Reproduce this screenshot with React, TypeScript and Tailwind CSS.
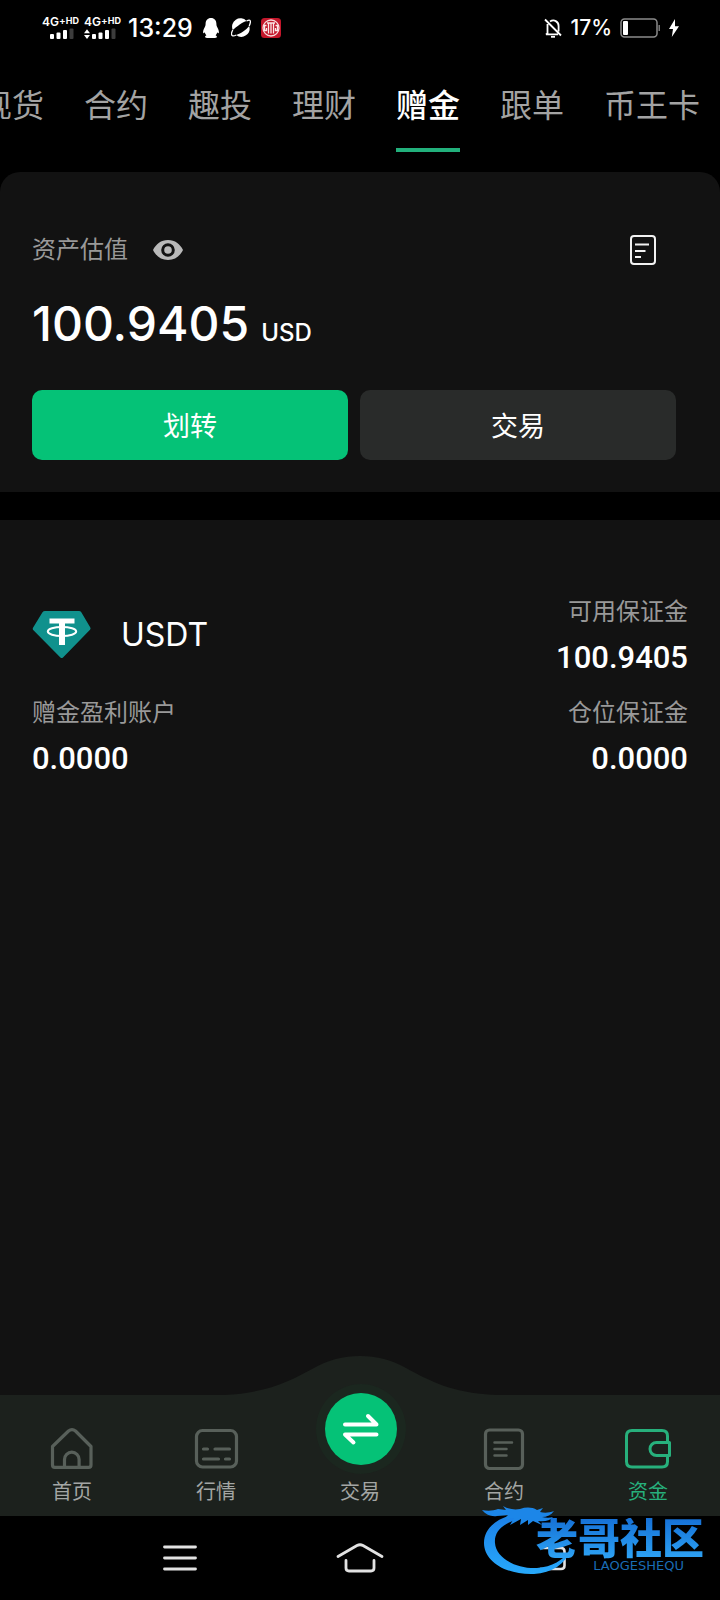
import type { ReactNode } from "react";

const tabs = ["现货", "合约", "趣投", "理财", "赠金", "跟单", "币王卡"];

function Signal({ data }: { data?: boolean }) {
  return (
    <div className="flex w-9 flex-col text-white">
      <div className="flex h-3 items-start font-semibold leading-3">
        <span className="text-[12px]">4G</span>
        <span className="text-[10px] leading-[8px]">+</span>
        <span className="text-[9px] font-bold leading-[9px]">HD</span>
      </div>
      <svg className="h-3 w-9" viewBox="0 0 36 12" fill="currentColor" aria-hidden="true">
        {data && <path d="M0 5.2 3 1.2 6 5.2zM0 7 3 11 6 7z" />}
        <rect x="8" y="6" width="4" height="5" rx="1" />
        <rect x="14.500" y="4.500" width="4" height="6.500" rx="1" />
        <rect x="21" y="2" width="4" height="9" rx="1" />
        <rect x="27.500" y="0.500" width="4" height="10.500" rx="1" fill="#3c3c3c" />
      </svg>
    </div>
  );
}

function StatusBar() {
  return (
    <div className="flex h-14 items-center justify-between pl-[42px] pr-10">
      <div className="flex items-center">
        <Signal />
        <div className="ml-1.5">
          <Signal data />
        </div>
        <span className="ml-2 text-[25px] font-medium leading-8">13:29</span>
        <svg className="ml-2.5 h-5 w-4" viewBox="0 0 16 20" fill="#fff" aria-hidden="true">
          <path d="M8 0c3.400 0 5.400 2.600 5.400 5.800 0 1.500.3 2.400 1 3.700.9 1.600 1.600 3.400 1.500 5-.1 1.300-1 .9-1.700-.2-.2 1.200-.8 2.200-1.600 3 .9.500 1.400 1 1.300 1.700-.1.900-1.500 1-3 1H5.100c-1.500 0-2.900-.1-3-1-.1-.7.400-1.200 1.300-1.700-.8-.8-1.400-1.800-1.600-3-.7 1.100-1.600 1.500-1.700.2-.1-1.600.6-3.400 1.500-5 .7-1.300 1-2.200 1-3.700C2.600 2.600 4.600 0 8 0z" />
        </svg>
        <svg className="ml-3 h-5 w-5" viewBox="0 0 20 20" fill="none" aria-hidden="true">
          <path d="M1.800 12A8.300 8.300 0 0 1 15.500 3C12 4 5.500 8.500 1.800 12z" fill="#fff" />
          <path d="M5.200 17C10 15.500 15.500 11.500 18.200 8a8.300 8.300 0 0 1-13 9z" fill="#fff" />
          <path d="M1.800 12C.4 14.500.2 17 1.400 17.700c.9.500 2.300.1 3.900-.7M15.500 3c1.800-.9 3.300-1 3.700-.2.500 1-.1 3.200-1 5.200" stroke="#fff" strokeWidth="1.300" />
        </svg>
        <svg className="ml-2.5 h-5 w-5" viewBox="0 0 20 20" fill="none" aria-hidden="true">
          <rect width="20" height="20" rx="3.500" fill="#c3172b" />
          <circle cx="10" cy="10" r="8" stroke="#f7dcdc" strokeWidth="1.300" />
          <path d="M7.500 5v10.500M10 5v10.500M12.500 5v10.500M6 5h8M5.500 7.500H3.500v5h2V10M14.500 7.500h2v5h-2V10" stroke="#fbe9e9" strokeWidth="1.300" />
        </svg>
      </div>
      <div className="flex items-center">
        <svg className="h-5 w-[18px]" viewBox="0 0 18 20" fill="none" stroke="#fff" strokeWidth="1.800" aria-hidden="true">
          <path d="M1 1.500 17 17.500M3.500 6v9.500L2 16.300h12M6 3.600C10 .8 14.600 3.600 14.600 8v5.500" />
          <path d="M7 18.800h4" />
        </svg>
        <span className="ml-2 text-[21px] font-medium leading-8">17%</span>
        <svg className="ml-2 h-5 w-10" viewBox="0 0 40 20" fill="none" aria-hidden="true">
          <rect x="1" y="1" width="36" height="18" rx="3.500" stroke="#8b8b8b" strokeWidth="1.500" />
          <rect x="3" y="3" width="5" height="14" rx="1" fill="#fff" />
          <path d="M39.200 7v6" stroke="#8b8b8b" strokeWidth="1.300" />
        </svg>
        <svg className="ml-2 h-[18px] w-3" viewBox="0 0 12 18" fill="#fff" aria-hidden="true">
          <path d="M7 0 1 10h4l-1.200 8L11 7.300H7z" />
        </svg>
      </div>
    </div>
  );
}

function Figure({ label, value, right }: { label: string; value: string; right?: boolean }) {
  return (
    <div className={right ? "flex flex-col gap-2.5 text-right" : "flex flex-col gap-2.5"}>
      <dt className="text-2xl leading-9 text-[#999]">{label}</dt>
      <dd className="font-[Roboto] text-[31px] font-medium leading-9">{value}</dd>
    </div>
  );
}

function NavItem({ label, active, children }: { label: string; active?: boolean; children: ReactNode }) {
  return (
    <a
      href="#"
      aria-current={active ? "page" : undefined}
      className={
        active
          ? "flex flex-col items-center gap-1.5 text-[#27b07c]"
          : "flex flex-col items-center gap-1.5 text-[#a3a6a4]"
      }
    >
      <svg
        className={active ? "h-12 w-12" : "h-12 w-12 text-[#58605a]"}
        viewBox="0 0 48 48"
        fill="none"
        stroke="currentColor"
        strokeWidth="3.200"
        strokeLinecap="round"
        strokeLinejoin="round"
        aria-hidden="true"
      >
        {children}
      </svg>
      <span className="text-xl leading-7">{label}</span>
    </a>
  );
}

function Watermark() {
  return (
    <div className="pointer-events-none absolute bottom-6 right-4 h-[72px] w-[222px]">
      <svg className="absolute inset-0 h-full w-full" viewBox="0 0 222 72" fill="none" aria-hidden="true">
        <defs>
          <linearGradient id="dragon" x1="0" y1="0" x2="0" y2="1">
            <stop offset="0" stopColor="#1c7fe6" />
            <stop offset="1" stopColor="#27a9fb" />
          </linearGradient>
        </defs>
        <path
          d="M32 11C14 14 2 25 2 39c0 18 21 32 50 31 18-1 31-10 37-24-8 10-19 17-34 18C34 65 14 54 13 39 12 28 20 20 36 15z"
          fill="url(#dragon)"
        />
        <path
          d="M0 6c5 1 11 1 16-1l8 1-3-4c5 3 11 4 17 3 6-2 12-2 17 1l6-2-3 4c4 1 9 1 14-1-3 4-7 6-12 6 4 1 8 1 11 0-3 4-9 5-15 4l4 4-9-4-5 4v-5l-8 5 1-6-11 6 4-7-11 2 5-5-11 1C10 13 4 11 0 6z"
          fill="#1c86e8"
        />
      </svg>
      <div className="absolute inset-y-0 right-0 flex flex-col items-end justify-end pb-1">
        <span className="bg-gradient-to-b from-[#1670d6] to-[#2fa4f4] bg-clip-text text-[42px] font-black leading-[42px] text-transparent">
          老哥社区
        </span>
        <span className="pr-5 font-['DejaVu_Sans'] text-[13px] leading-3 text-[#1a6cb4]">LAOGESHEQU</span>
      </div>
    </div>
  );
}

export default function App() {
  return (
    <div className="flex min-h-screen flex-col overflow-x-hidden bg-black font-[Inter,'Noto_Sans_CJK_SC',sans-serif] text-white">
      <StatusBar />

      <nav className="flex h-[116px] justify-end overflow-hidden pr-5">
        <div className="flex shrink-0 gap-10 pt-[26px]">
          {tabs.map((tab) => (
            <a
              key={tab}
              href="#"
              aria-current={tab === "赠金" ? "page" : undefined}
              className={
                tab === "赠金"
                  ? "h-[70px] whitespace-nowrap border-b-4 border-[#22b07c] text-[32px] font-medium leading-[48px]"
                  : "h-[70px] whitespace-nowrap text-[32px] leading-[48px] text-[#a3a3a3]"
              }
            >
              {tab}
            </a>
          ))}
        </div>
      </nav>

      <section className="rounded-t-[20px] bg-[#121212] pb-8 pl-8 pr-11 pt-[60px]">
        <div className="flex h-9 items-center justify-between">
          <div className="flex items-center gap-6">
            <h1 className="text-2xl leading-9 text-[#999]">资产估值</h1>
            <button type="button" aria-label="隐藏资产">
              <svg className="h-8 w-8" viewBox="0 0 32 32" aria-hidden="true">
                <path
                  d="M16 6C9 6 4 10 1 16c3 6 8 10 15 10s12-4 15-10C28 10 23 6 16 6zm0 16.800a6.800 6.800 0 1 1 0-13.600 6.800 6.800 0 0 1 0 13.600zm0-3a3.800 3.800 0 1 0 0-7.600 3.800 3.800 0 0 0 0 7.600z"
                  fill="#b9b9b9"
                />
              </svg>
            </button>
          </div>
          <button type="button" aria-label="资金记录" className="mr-4">
            <svg className="h-8 w-8" viewBox="0 0 32 32" fill="none" stroke="#f2f2f2" strokeWidth="2" aria-hidden="true">
              <rect x="3" y="2" width="24" height="28" rx="3" />
              <path d="M7 10.500h14M7 17h10.500M7 23h6" />
            </svg>
          </button>
        </div>

        <p className="mt-6 flex items-baseline gap-3 font-medium leading-[64px]">
          <span className="text-[48px]">100.9405</span>
          <span className="text-2xl">USD</span>
        </p>

        <div className="mt-[34px] grid grid-cols-2 gap-3">
          <button type="button" className="h-[70px] rounded-[10px] bg-[#05c277] pt-1 text-[27px]">
            划转
          </button>
          <button type="button" className="h-[70px] rounded-[10px] bg-[#292b2a] pt-1 text-[27px]">
            交易
          </button>
        </div>
      </section>

      <main className="mt-7 flex-1 bg-[#121212] px-8 pb-20 pt-[74px]">
        <dl className="grid grid-cols-2 gap-y-[19px]">
          <div className="flex items-center gap-[30px]">
            <svg className="h-[50px] w-[59px]" viewBox="0 0 59 50" aria-hidden="true">
              <path d="M13 1h34q1.500 0 2.300 1.300l9 15.200q.7 1.300-.3 2.300L31 47.500q-1.300 1.200-2.600 0L1.200 20q-1-1.100-.2-2.300L10.500 2.300Q11.400 1 13 1z" fill="#10918d" />
              <path d="M17.500 8.500h25v5h-9.500v21.500h-6V13.500h-9.500z" fill="#fff" />
              <ellipse cx="30" cy="21.500" rx="14.200" ry="4.500" fill="none" stroke="#fff" strokeWidth="2" />
            </svg>
            <h2 className="text-[32px] leading-10">USDT</h2>
          </div>
          <Figure label="可用保证金" value="100.9405" right />
          <Figure label="赠金盈利账户" value="0.0000" />
          <Figure label="仓位保证金" value="0.0000" right />
        </dl>
      </main>

      <nav className="relative h-[121px] bg-[#1c211d]">
        <svg className="absolute bottom-full left-1/2 h-10 w-[272px] -translate-x-1/2" viewBox="0 0 272 40" aria-hidden="true">
          <path d="M0 40C44 38 66 26 90 13c14-8 29-12 46-12s32 4 46 12c24 13 46 25 90 27z" fill="#1c211d" />
        </svg>
        <div className="relative grid grid-cols-5 pt-[29px]">
          <NavItem label="首页">
            <path d="M4.500 22.500 20.500 7q3.500-2.800 7 0l15.500 15.500v18.500q0 2.300-2.300 2.300H6.800q-2.300 0-2.300-2.300z" />
            <path d="M16.500 43V35.500a7.300 7.300 0 0 1 14.600 0V43" />
          </NavItem>
          <NavItem label="行情">
            <rect x="4.500" y="6.500" width="40" height="36.500" rx="6" />
            <path d="M11.500 25h4M23 25h14.500M11.500 35h15M33.500 35h4" />
          </NavItem>
          <a href="#" className="flex flex-col items-center gap-1.5 text-[#a3a6a4]">
            <span className="relative h-12 w-12">
              <span className="absolute -left-5 -top-10 flex h-[90px] w-[90px] items-center justify-center rounded-full bg-[#1b271f]">
                <svg className="h-[72px] w-[72px] rounded-full bg-[#05c277]" viewBox="0 0 72 72" fill="none" stroke="#fff" strokeWidth="4" strokeLinecap="round" strokeLinejoin="round" aria-hidden="true">
                  <path d="M20 31.500h31.500l-8.500-8.500M51.500 41.500H20l8.500 8" />
                </svg>
              </span>
            </span>
            <span className="text-xl leading-7">交易</span>
          </a>
          <NavItem label="合约">
            <rect x="5.500" y="6" width="37" height="38.500" rx="4" />
            <path d="M14.500 18.500h17.500M14.500 25h12M14.500 31.500h12" strokeWidth="2.500" />
          </NavItem>
          <NavItem label="资金" active>
            <path d="M43.500 18V12q0-5.500-5.500-5.500H8Q2.500 6.500 2.500 12v25.500Q2.500 43 8 43h30q5.500 0 5.500-5.500V32" strokeWidth="3" />
            <path d="M45.500 18.500h-13a6.500 6.500 0 0 0 0 13h13z" strokeWidth="3" />
          </NavItem>
        </div>
      </nav>

      <footer className="relative flex h-[84px] bg-black px-[12.5%]">
        <div className="grid flex-1 grid-cols-3 place-items-center">
          <button type="button" aria-label="最近任务">
            <svg className="h-7 w-9" viewBox="0 0 36 28" stroke="#e2e2e2" strokeWidth="2.800" strokeLinecap="round" aria-hidden="true">
              <path d="M2.500 3h31M2.500 14h31M2.500 25h31" />
            </svg>
          </button>
          <button type="button" aria-label="主屏幕">
            <svg className="h-8 w-12" viewBox="0 0 48 32" fill="none" stroke="#e2e2e2" strokeWidth="2.800" strokeLinecap="round" strokeLinejoin="round" aria-hidden="true">
              <path d="M2 14.500 21 3.500q3-1.500 6 0l19 11M10 18.500V26q0 3 3 3h22q3 0 3-3v-7.500" />
            </svg>
          </button>
          <button type="button" aria-label="返回">
            <svg className="h-7 w-[52px]" viewBox="0 0 52 28" fill="none" stroke="#e2e2e2" strokeWidth="2.600" aria-hidden="true">
              <path d="M28 4h19q3.500 0 3.500 3.500v14Q50.500 25 47 25H26" />
            </svg>
          </button>
        </div>
        <Watermark />
      </footer>
    </div>
  );
}
